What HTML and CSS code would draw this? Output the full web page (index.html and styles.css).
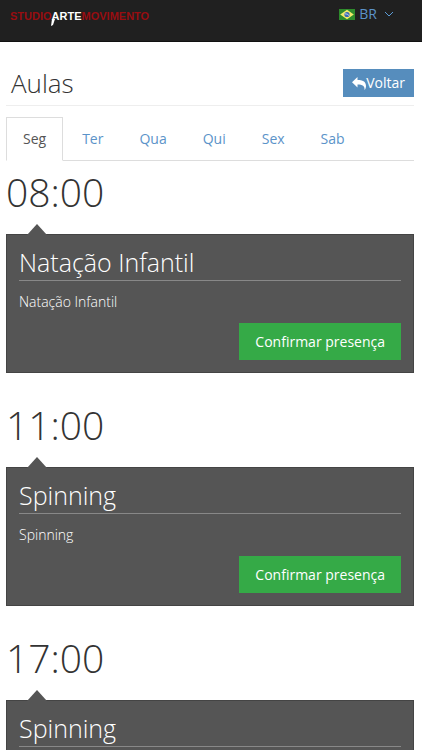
FILE: index.html
```html
<!DOCTYPE html>
<html lang="pt-BR">
<head>
<meta charset="utf-8">
<meta name="viewport" content="width=device-width, initial-scale=1">
<title>Aulas</title>
<link rel="stylesheet" href="styles.css">
</head>
<body>
<header class="topbar">
  <a class="logo" href="#">STUDIO<span class="logo-mid"><svg class="logo-tail" viewBox="0 0 4 7" aria-hidden="true"><path d="M1 0h3L2 6 0 7z"/></svg>ARTE</span>MOVIMENTO</a>
  <button class="lang" type="button">
    <svg class="flag" viewBox="0 0 16 11" aria-hidden="true"><path fill="#2e8b2c" d="M0 0h16v11H0z"/><path fill="#f2e96a" d="m8 .8 6.800 4.700L8 10.200 1.200 5.500z"/><circle cx="8" cy="5.500" r="2.600" fill="#3a69b5"/><path d="M5.800 4.800q2.500-.3 4.300 1.800" fill="none" stroke="#dce8f5" stroke-width=".8"/></svg>
    <span>BR</span>
    <svg class="chevron" viewBox="0 0 10 6" aria-hidden="true"><path d="m1 1 4 4 4-4"/></svg>
  </button>
</header>
<main class="page">
  <div class="page-head">
    <h1>Aulas</h1>
    <button class="back" type="button"><svg viewBox="0 0 14 13" aria-hidden="true"><path d="M5.500 0v3c5 0 8.500 1.500 8.500 6 0 1.500-.5 3-1.500 4 .5-4-2-5.500-7-5.500v3L0 5.200z"/></svg>Voltar</button>
  </div>
  <nav class="tabs">
    <a class="tab active" href="#">Seg</a>
    <a class="tab" href="#">Ter</a>
    <a class="tab" href="#">Qua</a>
    <a class="tab" href="#">Qui</a>
    <a class="tab" href="#">Sex</a>
    <a class="tab" href="#">Sab</a>
  </nav>
  <section class="slot">
    <h2>08:00</h2>
    <article class="card">
      <h3>Natação Infantil</h3>
      <p>Natação Infantil</p>
      <button class="confirm" type="button">Confirmar presença</button>
    </article>
  </section>
  <section class="slot">
    <h2>11:00</h2>
    <article class="card">
      <h3>Spinning</h3>
      <p>Spinning</p>
      <button class="confirm" type="button">Confirmar presença</button>
    </article>
  </section>
  <section class="slot">
    <h2>17:00</h2>
    <article class="card">
      <h3>Spinning</h3>
      <p>Spinning</p>
      <button class="confirm" type="button">Confirmar presença</button>
    </article>
  </section>
</main>
</body>
</html>
```
FILE: styles.css
```css
* {
  box-sizing: border-box;
}

body {
  margin: 0;
  background: #fff;
  color: #333;
  font: 400 14px/20px "Open Sans", sans-serif;
}

h1, h2, h3, p {
  margin: 0;
  font-weight: 300;
}

button {
  border: 0;
  font-family: inherit;
  font-weight: 400;
}

a {
  text-decoration: none;
}

.topbar {
  display: flex;
  justify-content: space-between;
  align-items: flex-start;
  padding: 4px 28px 13px 10px;
  background: #202020;
  border-bottom: 1px solid #111;
}

.logo {
  color: #980d10;
  font: 700 11px/24px "Liberation Sans", sans-serif;
}

.logo-mid {
  position: relative;
  color: #fff;
}

.logo-tail {
  position: absolute;
  left: -1px;
  top: 9px;
  width: 4px;
  height: 7px;
  fill: #fff;
}

.lang {
  display: flex;
  align-items: center;
  padding: 0;
  background: none;
  color: #5b93c9;
  font-size: 14px;
  line-height: 20px;
}

.flag {
  width: 16px;
  height: 11px;
  margin-right: 4px;
}

.chevron {
  width: 10px;
  height: 6px;
  margin-left: 7px;
  fill: none;
  stroke: #5b9bd5;
}

.page {
  padding: 20px 8px 0 6px;
}

.page-head {
  display: flex;
  justify-content: space-between;
  align-items: center;
  margin-bottom: 11px;
  padding: 5px 0 6px 5px;
  border-bottom: 1px solid #eee;
}

h1 {
  font-size: 26px;
  line-height: 32px;
}

.back {
  display: flex;
  align-items: center;
  padding: 4px 9px;
  background: #568dbd;
  color: #fff;
  font-size: 14px;
  line-height: 20px;
}

.back svg {
  width: 14px;
  height: 13px;
  fill: #fff;
}

.tabs {
  display: flex;
  gap: 2px;
  border-bottom: 1px solid #ddd;
}

.tab {
  margin-bottom: -1px;
  padding: 11px 16px;
  border: 1px solid transparent;
  color: #5b93c9;
  font-size: 14px;
  line-height: 20px;
}

.active {
  border-color: #ddd #ddd #fff;
  background: #fff;
  color: #555;
}

.slot {
  margin-bottom: 21px;
}

h2 {
  padding-top: 9px;
  font-size: 39px;
  line-height: 44px;
}

.card {
  position: relative;
  display: flex;
  flex-direction: column;
  margin-top: 20px;
  padding: 12px;
  border: 1px solid #444;
  background: #555;
  color: #fff;
}

.card::before {
  content: "";
  position: absolute;
  left: 20px;
  bottom: 100%;
  border: solid transparent;
  border-width: 0 10px 11px;
  border-bottom-color: #555;
}

h3 {
  padding-bottom: 3px;
  border-bottom: 1px solid #888;
  font-size: 25px;
  line-height: 30px;
}

.card p {
  margin: 11px 0;
  line-height: 20px;
}

.confirm {
  align-self: flex-end;
  padding: 8px 16px;
  background: #35aa47;
  color: #fff;
  font-size: 14px;
  line-height: 21px;
}
```
